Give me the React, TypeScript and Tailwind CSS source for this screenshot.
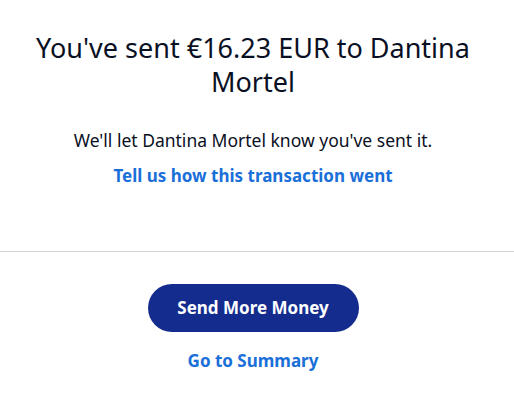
export default function App() {
  return (
    <div className="w-[514px] h-[417px] bg-white flex flex-col" style={{ fontFamily: '"Noto Sans", "Open Sans", sans-serif' }}>
      <div className="flex flex-col items-center pr-[8px]">
        <h1 className="mt-[31px] px-[20px] text-center text-[27px] leading-[34px] text-[#0a1024] font-normal">
          You've sent €16.23 EUR to Dantina Mortel
        </h1>
        <p className="mt-[29px] text-[17.5px] leading-[24px] text-[#0a1024]">
          We'll let Dantina Mortel know you've sent it.
        </p>
        <a className="mt-[12px] text-[17px] leading-[24px] font-bold text-[#1a6fd8]">
          Tell us how this transaction went
        </a>
      </div>
      <div className="mt-[63px] w-full h-px bg-[#d6d6d4]" />
      <div className="flex flex-col items-center pr-[8px]">
        <button className="mt-[32px] w-[211px] h-[48px] rounded-full bg-[#142c8e] text-white text-[17px] font-bold">
          Send More Money
        </button>
        <a className="mt-[17px] text-[17px] leading-[24px] font-bold text-[#1a6fd8]">
          Go to Summary
        </a>
      </div>
    </div>
  );
}
